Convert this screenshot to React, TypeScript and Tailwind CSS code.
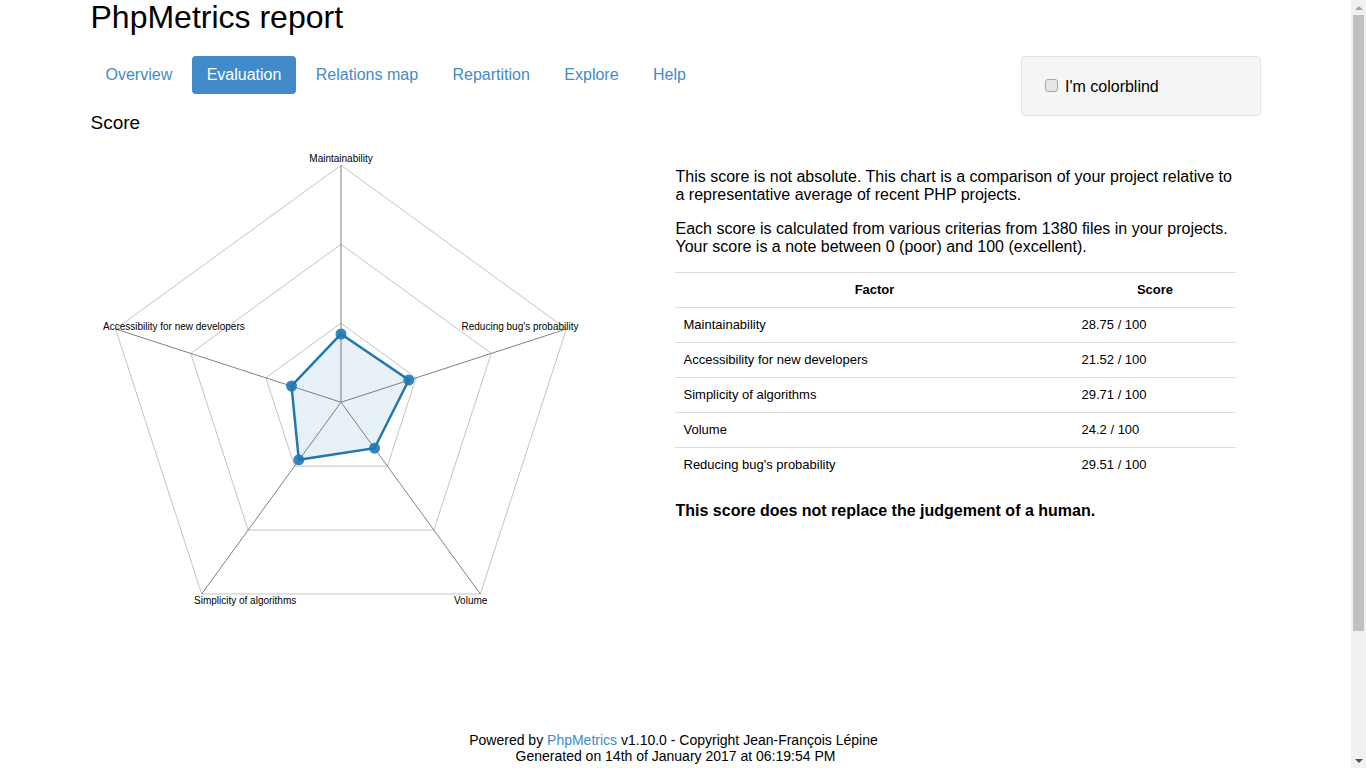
const CX = 341
const CY = 402.25
const RADIUS = 237

const font = { fontFamily: '"Liberation Sans", Arial, sans-serif' }

const tabs = ['Overview', 'Evaluation', 'Relations map', 'Repartition', 'Explore', 'Help']

const scores = [
  { label: 'Maintainability', value: '28.75 / 100' },
  { label: 'Accessibility for new developers', value: '21.52 / 100' },
  { label: 'Simplicity of algorithms', value: '29.71 / 100' },
  { label: 'Volume', value: '24.2 / 100' },
  { label: "Reducing bug's probability", value: '29.51 / 100' },
]

// sommets du pentagone, sens horaire depuis le haut
const angles = [0, 72, 144, 216, 288].map((d) => (d * Math.PI) / 180)

function vertex(angle: number, r: number) {
  return [CX + r * Math.sin(angle), CY - r * Math.cos(angle)]
}

function ring(r: number) {
  return angles.map((a) => vertex(a, r).join(',')).join(' ')
}

const dots = [
  [341, 334],
  [408.8, 380],
  [374.5, 448.2],
  [298.8, 459.8],
  [291.5, 386],
]

function RadarChart() {
  // l'origine du svg est à x=90, y=140 de la page
  return (
    <svg width="500" height="480" viewBox="90 140 500 480" className="ml-[-0.5px] block shrink-0">
      {[RADIUS / 3, (RADIUS * 2) / 3, RADIUS].map((r) => (
        <polygon key={r} points={ring(r)} fill="none" stroke="#c4c4c4" strokeWidth="1" />
      ))}
      {angles.map((a) => {
        const [x, y] = vertex(a, RADIUS)
        return <line key={a} x1={CX} y1={CY} x2={x} y2={y} stroke="#808080" strokeWidth="1" />
      })}
      <polygon points={dots.map((d) => d.join(',')).join(' ')} fill="#1f77b4" fillOpacity="0.1" stroke="#1f77b4" strokeWidth="2.5" />
      {dots.map(([x, y]) => (
        <circle key={x} cx={x} cy={y} r="5.5" fill="#1f77b4" fillOpacity="0.9" />
      ))}
      <g fontSize="10" fill="#000" style={font}>
        <text x="341" y="162" textAnchor="middle">Maintainability</text>
        <text x="103" y="330">Accessibility for new developers</text>
        <text x="578.5" y="330" textAnchor="end">Reducing bug's probability</text>
        <text x="194" y="604">Simplicity of algorithms</text>
        <text x="454" y="604">Volume</text>
      </g>
    </svg>
  )
}

function ScoreTable() {
  return (
    <table className="mt-4 ml-[-0.5px] w-[561px] table-fixed border-collapse text-[13px] leading-[18px] text-black">
      <thead>
        <tr className="h-[35px] border-t border-[#dddddd]">
          <th className="w-[398px] pr-2 pl-[9px] text-center font-bold">Factor</th>
          <th className="pr-2 pl-[9px] text-center font-bold">Score</th>
        </tr>
      </thead>
      <tbody>
        {scores.map((s) => (
          <tr key={s.label} className="h-[35px] border-t border-[#dddddd]">
            <td className="pr-2 pl-[8.5px]">{s.label}</td>
            <td className="pr-2 pl-[8.5px]">{s.value}</td>
          </tr>
        ))}
      </tbody>
    </table>
  )
}

function Scrollbar() {
  return (
    <div className="fixed top-0 right-0 flex h-screen w-[15px] flex-col items-center bg-[#f1f1f1]">
      <div className="flex h-[15px] w-full items-center justify-center">
        <div className="h-0 w-0 border-x-[4px] border-b-[4px] border-x-transparent border-b-[#a3a3a3]" />
      </div>
      <div className="h-[616px] w-[11px] bg-[#c1c1c1]" />
      <div className="flex-1" />
      <div className="flex h-[15px] w-full items-center justify-center">
        <div className="h-0 w-0 border-x-[4px] border-t-[4px] border-x-transparent border-t-[#505050]" />
      </div>
    </div>
  )
}

export default function App() {
  return (
    <div className="h-[918px] w-[1351px] bg-white text-black" style={font}>
      <div className="mx-auto w-[1170px]">
        <h1 className="pt-px text-[32px] leading-[33px] font-normal">PhpMetrics report</h1>

        <div className="mt-[22px] flex items-start justify-between">
          <ul className="flex gap-[4.45px] text-[16px] leading-[18px]">
            {tabs.map((t) => (
              <li
                key={t}
                className={`rounded px-[15px] py-[10px] ${t === 'Evaluation' ? 'bg-[#428bca] text-white' : 'text-[#428bca]'}`}
              >
                {t}
              </li>
            ))}
          </ul>
          <div className="flex h-[60px] w-[240px] items-center rounded border border-[#e3e3e3] bg-[#f5f5f5] pl-[23px]">
            <input
              type="checkbox"
              className="mb-[2px] h-[13px] w-[13px] appearance-none rounded-[3px] border border-[#a6a6a6] bg-[#e6e6e6]"
            />
            <span className="mt-px ml-[7.5px] text-[16px] leading-[18px]">I'm colorblind</span>
          </div>
        </div>

        <h2 className="mt-[-4px] text-[19px] leading-[22px] font-normal">Score</h2>

        <div className="flex">
          <div className="w-[585px] shrink-0">
            <div className="mt-[6px]">
              <RadarChart />
            </div>
          </div>
          <div className="pt-[34px] text-[16px] leading-[18px]">
            <p>
              This score is not absolute. This chart is a comparison of your project relative to
              <br />a representative average of recent PHP projects.
            </p>
            <p className="mt-4">
              Each score is calculated from various criterias from 1380 files in your projects.
              <br />Your score is a note between 0 (poor) and 100 (excellent).
            </p>
            <ScoreTable />
            <p className="mt-[19px] font-bold">This score does not replace the judgement of a human.</p>
          </div>
        </div>

        <div className="mt-[112px] text-center text-[14px] leading-4">
          <p className="pr-[4px]">
            Powered by <span className="text-[#428bca]">PhpMetrics</span> v1.10.0 - Copyright Jean-François Lépine
          </p>
          <p>Generated on 14th of January 2017 at 06:19:54 PM</p>
        </div>
      </div>
      <Scrollbar />
    </div>
  )
}
